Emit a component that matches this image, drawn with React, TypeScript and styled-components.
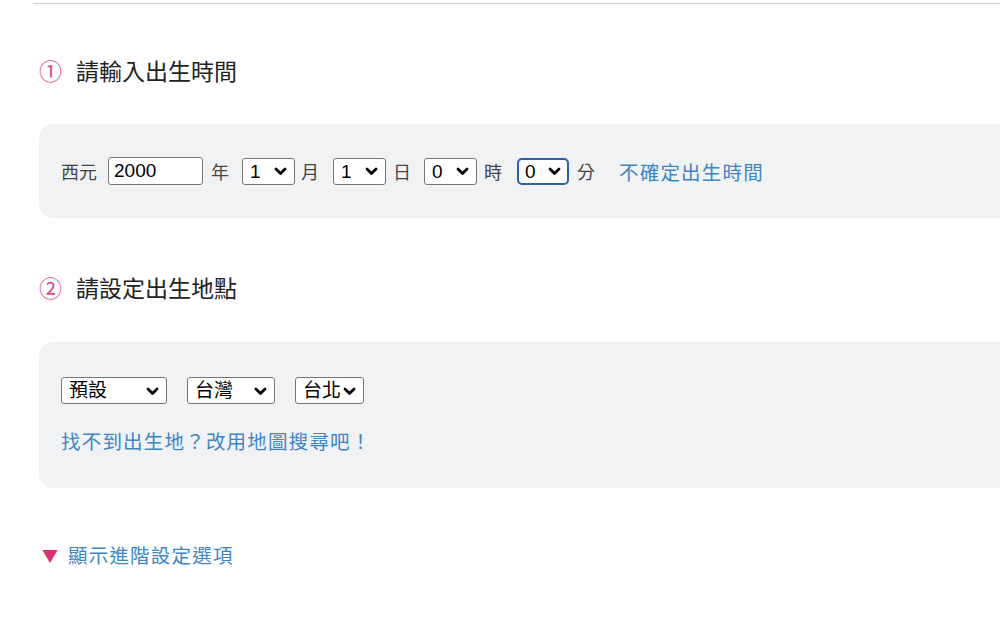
import React from "react";
import styled, { createGlobalStyle } from "styled-components";

const Global = createGlobalStyle`
  html, body { margin: 0; padding: 0; background: #fff; overflow: hidden; }
  body { font-family: "Liberation Sans", "Noto Sans CJK TC", sans-serif; color: #333; }
`;

const Page = styled.div`
  width: 1100px;
  padding-left: 33px;
  box-sizing: border-box;
`;

const TopRule = styled.div`
  height: 3px;
  border-bottom: 1px solid #cfcfcf;
`;

const Content = styled.div`
  padding-left: 6px;
`;

const Heading = styled.h2<{ $top: number }>`
  margin: ${(p) => p.$top}px 0 0 0;
  font-family: "Noto Sans CJK TC", sans-serif;
  font-weight: 400;
  font-size: 23px;
  line-height: 28px;
  color: #222;
  display: flex;
  align-items: center;
`;

const Num = styled.span`
  color: #d94a8c;
  margin-right: 14px;
`;

const Panel = styled.div<{ $top: number }>`
  margin-top: ${(p) => p.$top}px;
  background: #f1f2f4;
  border-radius: 14px 0 0 14px;
`;

const TimePanel = styled(Panel)`
  height: 94px;
  padding: 0 22px;
  display: flex;
  align-items: center;
`;

const PlacePanel = styled(Panel)`
  height: 146px;
  padding: 35px 22px 0;
  box-sizing: border-box;
`;

const Text = styled.span`
  font-family: "Noto Sans CJK TC", sans-serif;
  font-size: 18px;
  line-height: 26px;
  color: #444;
`;

const Field = styled.input`
  margin: 0 8px 0 11px;
  width: 95px;
  height: 28px;
  box-sizing: border-box;
  border: 1px solid #767676;
  border-radius: 3px;
  padding: 0 5px;
  font-family: "Liberation Sans", sans-serif;
  font-size: 19px;
  color: #000;
  background: #fff;
  outline: none;
`;

const SelectWrap = styled.span<{ $ml: number; $mr: number }>`
  position: relative;
  display: inline-flex;
  margin: 0 ${(p) => p.$mr}px 0 ${(p) => p.$ml}px;
`;

const Select = styled.select<{ $w: number; $focus?: boolean }>`
  appearance: none;
  -webkit-appearance: none;
  width: ${(p) => p.$w}px;
  height: 27px;
  box-sizing: border-box;
  border: ${(p) => (p.$focus ? "2px solid #2a5fb0" : "1px solid #767676")};
  border-radius: ${(p) => (p.$focus ? "5px" : "3px")};
  padding: 0 0 0 ${(p) => (p.$focus ? 6 : 7)}px;
  background: #fff;
  font-family: "Liberation Sans", "Noto Sans CJK TC", sans-serif;
  font-size: 19px;
  color: #000;
  outline: none;
`;

const Chevron = styled.svg`
  position: absolute;
  right: 8px;
  top: 50%;
  margin-top: -4px;
  width: 13px;
  height: 9px;
  pointer-events: none;
`;

const Link = styled.a<{ $ml?: number }>`
  font-family: "Noto Sans CJK TC", sans-serif;
  font-size: 19.5px;
  letter-spacing: 1.2px;
  color: #3d86c6;
  text-decoration: none;
  margin-left: ${(p) => p.$ml ?? 0}px;
  cursor: pointer;
`;

const SelectRow = styled.div`
  display: flex;
  align-items: center;
  gap: 20px;
`;

const MapLine = styled.div`
  margin-top: 24px;
  line-height: 26px;
`;

const Toggle = styled.div`
  margin: 54px 0 0 3px;
  display: flex;
  align-items: center;
  font-family: "Noto Sans CJK TC", sans-serif;
  font-size: 18px;
  line-height: 26px;
`;

const Tri = styled.span`
  color: #e0306f;
  font-size: 16px;
  margin-right: 10px;
`;

type DropProps = {
  w: number;
  value: string;
  options: string[];
  ml?: number;
  mr?: number;
  focus?: boolean;
};

function Drop({ w, value, options, ml = 0, mr = 0, focus }: DropProps) {
  return (
    <SelectWrap $ml={ml} $mr={mr}>
      <Select $w={w} $focus={focus} defaultValue={value}>
        {options.map((o) => (
          <option key={o} value={o}>
            {o}
          </option>
        ))}
      </Select>
      <Chevron viewBox="0 0 13 9">
        <path
          d="M2 2 L6.5 6.5 L11 2"
          fill="none"
          stroke="#000"
          strokeWidth="2.8"
          strokeLinecap="round"
          strokeLinejoin="round"
        />
      </Chevron>
    </SelectWrap>
  );
}

const range = (a: number, b: number) =>
  Array.from({ length: b - a + 1 }, (_, i) => String(a + i));

export default function App() {
  return (
    <>
      <Global />
      <Page>
        <TopRule />
        <Content>
          <Heading $top={52}>
            <Num>①</Num>請輸入出生時間
          </Heading>
          <TimePanel $top={40}>
            <Text>西元</Text>
            <Field defaultValue="2000" />
            <Text>年</Text>
            <Drop w={53} value="1" options={range(1, 12)} ml={13} mr={6} />
            <Text>月</Text>
            <Drop w={53} value="1" options={range(1, 31)} ml={14} mr={7} />
            <Text>日</Text>
            <Drop w={53} value="0" options={range(0, 23)} ml={13} mr={7} />
            <Text>時</Text>
            <Drop w={52} value="0" options={range(0, 59)} ml={15} mr={8} focus />
            <Text>分</Text>
            <Link $ml={24}>不確定出生時間</Link>
          </TimePanel>

          <Heading $top={55}>
            <Num>②</Num>請設定出生地點
          </Heading>
          <PlacePanel $top={41}>
            <SelectRow>
              <Drop w={106} value="預設" options={["預設", "自訂"]} />
              <Drop w={88} value="台灣" options={["台灣", "香港", "澳門"]} />
              <Drop w={69} value="台北" options={["台北", "台中", "高雄"]} />
            </SelectRow>
            <MapLine>
              <Link>找不到出生地？改用地圖搜尋吧！</Link>
            </MapLine>
          </PlacePanel>

          <Toggle>
            <Tri>▼</Tri>
            <Link>顯示進階設定選項</Link>
          </Toggle>
        </Content>
      </Page>
    </>
  );
}
